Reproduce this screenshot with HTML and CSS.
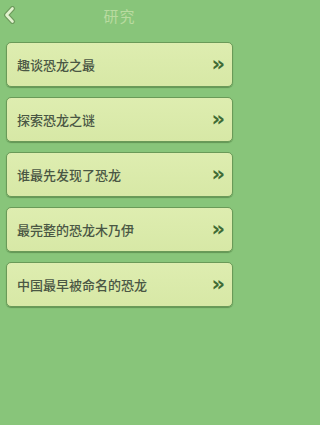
FILE: index.html
```html
<!DOCTYPE html>
<html lang="zh">
<head>
<meta charset="utf-8">
<link rel="stylesheet" href="styles.css">
</head>
<body>
<div class="page">
  <header class="topbar">
    <span class="back">
      <svg width="13" height="18" viewBox="0 0 13 18"><path d="M9.5 2.5 L3.5 9 L9.5 15.5" fill="none" stroke="#6d9a5c" stroke-width="5" stroke-linecap="round" stroke-linejoin="round"/><path d="M9.5 2.5 L3.5 9 L9.5 15.5" fill="none" stroke="#e2f2cf" stroke-width="2.6" stroke-linecap="round" stroke-linejoin="round"/></svg>
    </span>
    <h1 class="title">研究</h1>
  </header>
  <ul class="list">
    <li class="item"><span class="label">趣谈恐龙之最</span><span class="arrow">»</span></li>
    <li class="item"><span class="label">探索恐龙之谜</span><span class="arrow">»</span></li>
    <li class="item"><span class="label">谁最先发现了恐龙</span><span class="arrow">»</span></li>
    <li class="item"><span class="label">最完整的恐龙木乃伊</span><span class="arrow">»</span></li>
    <li class="item"><span class="label">中国最早被命名的恐龙</span><span class="arrow">»</span></li>
  </ul>
</div>
</body>
</html>
```
FILE: styles.css
```css
html, body {
  margin: 0;
  padding: 0;
  background: #88c57a;
}
body {
  font-family: "Noto Sans CJK SC", "Noto Sans", sans-serif;
}
.page {
  width: 239px;
  height: 425px;
  background: #88c57a;
}
.topbar {
  position: relative;
  height: 42px;
  display: flex;
  justify-content: center;
}
.back {
  position: absolute;
  left: 3px;
  top: 6px;
  width: 13px;
  height: 18px;
}
.back svg { display: block; }
.title {
  margin: 0;
  padding-top: 5px;
  font-size: 15px;
  line-height: 22px;
  font-weight: normal;
  color: #b9dba0;
  letter-spacing: 1px;
}
.list {
  list-style: none;
  margin: 0;
  padding: 0 6px 0 6px;
  display: flex;
  flex-direction: column;
  gap: 10px;
}
.item {
  box-sizing: border-box;
  height: 45px;
  display: flex;
  align-items: center;
  justify-content: space-between;
  padding: 0 7px 0 10px;
  background: linear-gradient(#deedb0, #d7e8a6);
  border: 1px solid #6a9a58;
  border-radius: 5px;
  box-shadow: 0 1px 1px rgba(50, 90, 40, 0.45);
}
.label {
  font-size: 13px;
  font-weight: 500;
  color: #4a5744;
  line-height: 16px;
}
.arrow {
  font-family: "DejaVu Sans", sans-serif;
  font-size: 21px;
  font-weight: bold;
  color: #3f6b35;
  line-height: 20px;
  margin-top: -2px;
}
```
